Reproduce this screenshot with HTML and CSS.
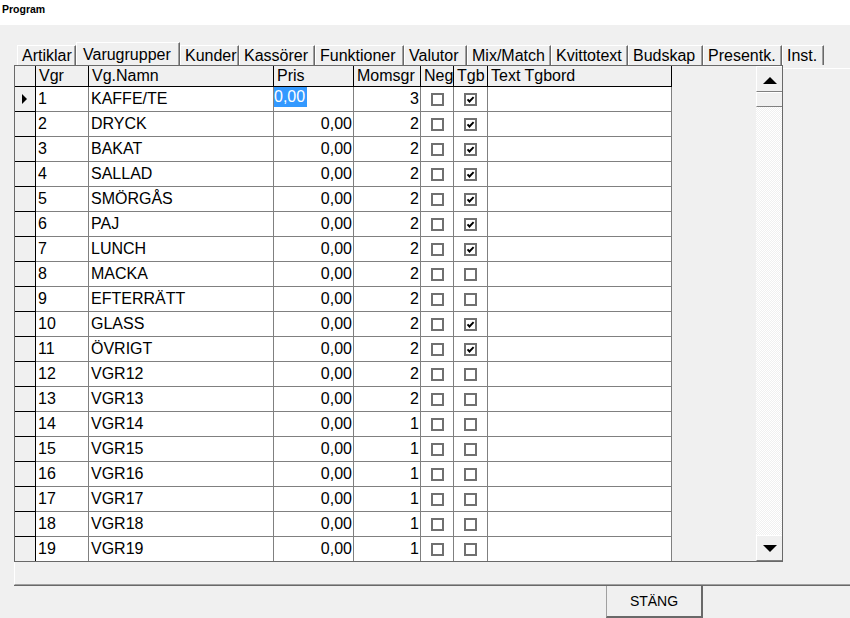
FILE: index.html
```html
<!DOCTYPE html>
<html lang="sv">
<head>
  <title>Program</title>
  <link rel="stylesheet" href="styles.css">
</head>
<body>
  <div class="titlebar">Program</div>

  <div class="tabs">
    <div class="tab tab-artiklar">Artiklar</div>
    <div class="tab tab-active tab-varugrupper">Varugrupper</div>
    <div class="tab tab-kunder">Kunder</div>
    <div class="tab tab-kassorer">Kassörer</div>
    <div class="tab tab-funktioner">Funktioner</div>
    <div class="tab tab-valutor">Valutor</div>
    <div class="tab tab-mixmatch">Mix/Match</div>
    <div class="tab tab-kvittotext">Kvittotext</div>
    <div class="tab tab-budskap">Budskap</div>
    <div class="tab tab-presentk">Presentk.</div>
    <div class="tab tab-inst">Inst.</div>
  </div>

  <div class="page">
    <div class="page-top">
      <div class="grid">
        <div class="sheet">
          <div class="rows" id="rows">
            <div class="row head">
              <div class="cell ind"></div>
              <div class="cell">Vgr</div>
              <div class="cell">Vg.Namn</div>
              <div class="cell">Pris</div>
              <div class="cell">Momsgr</div>
              <div class="cell">Neg</div>
              <div class="cell">Tgb</div>
              <div class="cell">Text Tgbord</div>
            </div>
          </div>
          <div class="sheet-empty"></div>
        </div>
        <div class="vscroll">
          <div class="sb-btn"><span class="arrow-up"></span></div>
          <div class="sb-thumb"></div>
          <div class="sb-track"></div>
          <div class="sb-btn"><span class="arrow-down"></span></div>
        </div>
      </div>
      <div class="page-side"></div>
    </div>
    <div class="page-strip"></div>
  </div>

  <div class="footer">
    <button class="btn-close">STÄNG</button>
  </div>

  <script>
    // vgr, namn, momsgr, neg, tgb
    const groups = [
      ["1", "KAFFE/TE", 3, false, true],
      ["2", "DRYCK", 2, false, true],
      ["3", "BAKAT", 2, false, true],
      ["4", "SALLAD", 2, false, true],
      ["5", "SMÖRGÅS", 2, false, true],
      ["6", "PAJ", 2, false, true],
      ["7", "LUNCH", 2, false, true],
      ["8", "MACKA", 2, false, false],
      ["9", "EFTERRÄTT", 2, false, false],
      ["10", "GLASS", 2, false, true],
      ["11", "ÖVRIGT", 2, false, true],
      ["12", "VGR12", 2, false, false],
      ["13", "VGR13", 2, false, false],
      ["14", "VGR14", 1, false, false],
      ["15", "VGR15", 1, false, false],
      ["16", "VGR16", 1, false, false],
      ["17", "VGR17", 1, false, false],
      ["18", "VGR18", 1, false, false],
      ["19", "VGR19", 1, false, false]
    ];

    const tick = '<svg width="9" height="9" viewBox="0 0 9 9"><polyline points="1.5,4.3 3.5,6.5 7.6,2.2" fill="none" stroke="#000" stroke-width="1.9"/></svg>';

    function checkbox(on) {
      return '<span class="check">' + (on ? tick : '') + '</span>';
    }

    const rows = document.getElementById("rows");
    groups.forEach(function (g, i) {
      const first = i === 0;
      const row = document.createElement("div");
      row.className = "row";
      row.innerHTML =
        '<div class="cell ind">' + (first ? '<span class="current"></span>' : '') + '</div>' +
        '<div class="cell">' + g[0] + '</div>' +
        '<div class="cell">' + g[1] + '</div>' +
        (first
          ? '<div class="cell editing"><span class="selected">0,00</span></div>'
          : '<div class="cell num">0,00</div>') +
        '<div class="cell num">' + g[2] + '</div>' +
        '<div class="cell box">' + checkbox(g[3]) + '</div>' +
        '<div class="cell box">' + checkbox(g[4]) + '</div>' +
        '<div class="cell"></div>';
      rows.appendChild(row);
    });
  </script>
</body>
</html>
```

FILE: styles.css
```css
html, body {
  margin: 0;
  padding: 0;
  width: 850px;
  height: 618px;
  overflow: hidden;
  background: #f0f0f0;
  font-family: "Liberation Sans", Arial, sans-serif;
  font-size: 16px;
  color: #000;
}

.titlebar {
  height: 25px;
  background: #fff;
  padding-left: 2px;
  font-size: 10.5px;
  font-weight: bold;
  line-height: 18px;
  box-sizing: border-box;
}

/* tab strip */

.tabs {
  display: flex;
  align-items: flex-end;
  height: 40px;
  padding-left: 17px;
}

.tab {
  height: 20px;
  box-sizing: border-box;
  padding: 1px 0 0 4px;
  line-height: 18px;
  white-space: nowrap;
  border-top: 1px solid #fff;
  border-left: 1px solid #fff;
  border-right: 1px solid #696969;
  box-shadow: inset -1px 0 0 #a0a0a0;
}

.tab-active {
  height: 23px;
  padding: 3px 0 0 6px;
}

.tab-artiklar { width: 59px; }
.tab-varugrupper { width: 104px; }
.tab-kunder { width: 59px; }
.tab-kassorer { width: 76px; }
.tab-funktioner { width: 89px; }
.tab-valutor { width: 63px; }
.tab-mixmatch { width: 84px; }
.tab-kvittotext { width: 77px; }
.tab-budskap { width: 75px; }
.tab-presentk { width: 79px; }
.tab-inst { width: 42px; }

/* tab page */

.page {
  margin-left: 14px;
  width: 836px;
  border-bottom: 1px solid #696969;
}

.page-top {
  display: flex;
}

.page-side {
  flex: 1;
  margin-top: 3px;
  border-top: 1px solid #fff;
}

.page-strip {
  height: 22px;
  border-left: 1px solid #fff;
  border-bottom: 1px solid #a0a0a0;
}

/* grid */

.grid {
  display: flex;
  width: 769px;
  height: 497px;
  box-sizing: border-box;
  border: 1px solid #696969;
  overflow: hidden;
}

.sheet {
  display: flex;
  flex: 1;
}

.rows {
  width: 657px;
  background: #fff;
}

.sheet-empty {
  flex: 1;
  background: #f0f0f0;
}

.row {
  display: grid;
  grid-template-columns: 21px 53px 185px 80px 67px 33px 34px 184px;
  height: 25px;
}

.cell {
  box-sizing: border-box;
  border-right: 1px solid #808080;
  border-bottom: 1px solid #808080;
  padding-left: 2px;
  line-height: 24px;
  white-space: nowrap;
  overflow: hidden;
}

.row .ind {
  background: #f0f0f0;
  border-color: #000;
  padding: 0;
  display: flex;
  align-items: center;
}

.head {
  height: 21px;
}

.head .cell {
  background: #f0f0f0;
  border-color: #000;
  padding-left: 3px;
  line-height: 20px;
}

.num {
  text-align: right;
  padding: 0 1px 0 0;
}

.editing {
  padding: 0;
}

.selected {
  display: inline-block;
  background: #3399ff;
  color: #fff;
  line-height: 20px;
  padding: 0 2px 0 0;
  vertical-align: top;
}

.current {
  margin-left: 7px;
  border-left: 5px solid #000;
  border-top: 5px solid transparent;
  border-bottom: 5px solid transparent;
}

.box {
  display: flex;
  justify-content: center;
  align-items: center;
  padding: 1px 0 0 0;
}

.check {
  width: 13px;
  height: 13px;
  box-sizing: border-box;
  border: 2px solid #707070;
  background: #fff;
  display: flex;
  justify-content: center;
  align-items: center;
}

/* vertical scrollbar */

.vscroll {
  width: 26px;
  display: flex;
  flex-direction: column;
}

.sb-btn {
  height: 26px;
  box-sizing: border-box;
  background: #f0f0f0;
  border-top: 1px solid #fff;
  border-left: 1px solid #fff;
  border-bottom: 1px solid #808080;
  display: flex;
  justify-content: center;
  align-items: center;
}

.sb-thumb {
  height: 15px;
  box-sizing: border-box;
  background: #f0f0f0;
  border-top: 1px solid #fff;
  border-left: 1px solid #fff;
  border-bottom: 1px solid #808080;
}

.sb-track {
  flex: 1;
  background: repeating-conic-gradient(#fff 0 25%, #f0f0f0 0 50%) 0 0 / 2px 2px;
}

.arrow-up {
  margin-top: 2px;
  border-bottom: 7px solid #000;
  border-left: 7px solid transparent;
  border-right: 7px solid transparent;
}

.arrow-down {
  margin-top: 1px;
  border-top: 7px solid #000;
  border-left: 7px solid transparent;
  border-right: 7px solid transparent;
}

/* bottom bar */

.footer {
  display: flex;
  height: 32px;
}

.btn-close {
  margin-left: 606px;
  width: 97px;
  height: 32px;
  padding: 0;
  background: #f0f0f0;
  border: none;
  border-left: 1px solid #a0a0a0;
  border-right: 2px solid #696969;
  border-bottom: 2px solid #696969;
  font-family: "Liberation Sans", Arial, sans-serif;
  font-size: 14px;
  color: #000;
}
```
